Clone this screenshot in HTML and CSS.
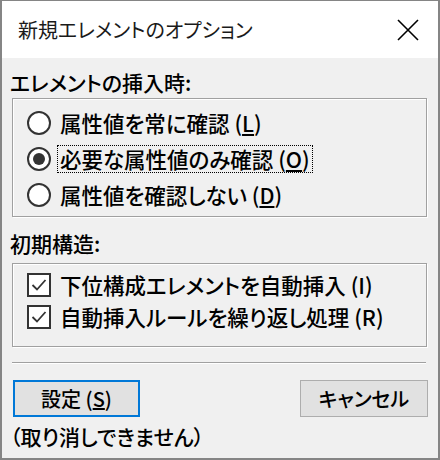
FILE: index.html
```html
<!DOCTYPE html>
<html lang="ja">
<head>
  <meta charset="UTF-8" />
  <title>新規エレメントのオプション</title>
  <link rel="stylesheet" href="styles.css">
</head>
<body>

<div class="dialog">
  <div class="titlebar">
    <span class="title">新規エレメントのオプション</span>
    <svg class="close" width="22" height="22" viewBox="0 0 22 22">
      <path d="M1 1 L21 21 M21 1 L1 21" stroke="#000" stroke-width="1.6" fill="none"/>
    </svg>
  </div>

  <div class="content">
    <div class="group-label">エレメントの挿入時:</div>
    <div class="group radios">
      <div class="option">
        <span class="radio"></span>
        <span class="text">属性値を常に確認 (<u>L</u>)</span>
      </div>
      <div class="option">
        <span class="radio checked"></span>
        <span class="text focused">必要な属性値のみ確認 (<u>O</u>)</span>
      </div>
      <div class="option">
        <span class="radio"></span>
        <span class="text">属性値を確認しない (<u>D</u>)</span>
      </div>
    </div>

    <div class="group-label second">初期構造:</div>
    <div class="group checks">
      <div class="option short">
        <span class="checkbox">
          <svg width="18" height="18" viewBox="0 0 18 18"><path d="M2.5 9 L7 13.5 L15.5 4" stroke="#333" stroke-width="1.8" fill="none"/></svg>
        </span>
        <span class="text">下位構成エレメントを自動挿入 (I)</span>
      </div>
      <div class="option short">
        <span class="checkbox">
          <svg width="18" height="18" viewBox="0 0 18 18"><path d="M2.5 9 L7 13.5 L15.5 4" stroke="#333" stroke-width="1.8" fill="none"/></svg>
        </span>
        <span class="text">自動挿入ルールを繰り返し処理 (R)</span>
      </div>
    </div>

    <div class="separator"></div>

    <div class="buttons">
      <button class="btn primary">設定 (<u>S</u>)</button>
      <button class="btn">キャンセル</button>
    </div>

    <div class="note">（取り消しできません）</div>
  </div>
</div>

</body>
</html>
```

FILE: styles.css
```css
body {
  margin: 0;
  background-color: #f0f0f0;
}

.dialog {
  width: 440px;
  height: 460px;
  box-sizing: border-box;
  border: 2px solid #858585;
  border-top-width: 1px;
  background-color: #f0f0f0;
  font-family: "Noto Sans CJK JP", sans-serif;
  font-feature-settings: "palt";
  font-weight: 500;
  color: #000;
}

.titlebar {
  height: 57px;
  background-color: #fff;
  display: flex;
  align-items: center;
  justify-content: space-between;
  padding: 0 19px 0 16px;
  font-size: 20px;
}

.title {
  color: #1a1a1a;
  font-weight: 400;
}

.content {
  padding: 0 9px 0 8px;
}

.group-label {
  font-size: 21px;
  line-height: 24px;
  margin-top: 12px;
}

.group-label.second {
  margin-top: 14px;
}

.group {
  margin: 4px 2px 0;
  border: 1px solid #a0a0a0;
  box-shadow: inset 1px 1px 0 #fff, 1px 1px 0 #fff;
}

.group.radios {
  padding: 6px 0 3px;
}

.group.checks {
  margin-top: 8px;
  padding: 5px 0 13px;
}

.option {
  display: flex;
  align-items: center;
  height: 36px;
  padding-left: 14px;
  gap: 6px;
  font-size: 21.5px;
}

.option.short {
  height: 32px;
}

.text {
  border: 1px dotted transparent;
  padding: 0 2px;
  line-height: 26px;
}

.text.focused {
  border-color: #000;
}

.radio {
  width: 24px;
  height: 24px;
  box-sizing: border-box;
  border: 2px solid #333;
  border-radius: 50%;
  background-color: #fff;
  display: flex;
  align-items: center;
  justify-content: center;
}

.radio.checked::after {
  content: "";
  width: 12px;
  height: 12px;
  border-radius: 50%;
  background-color: #333;
}

.checkbox {
  width: 24px;
  height: 24px;
  box-sizing: border-box;
  border: 2px solid #333;
  background-color: #fff;
  display: flex;
  align-items: center;
  justify-content: center;
}

.separator {
  margin: 15px 3px 0 2px;
  border-top: 1px solid #a0a0a0;
  border-bottom: 1px solid #fff;
}

.buttons {
  display: flex;
  justify-content: space-between;
  margin-top: 16px;
  padding: 0 1px 0 3px;
}

.btn {
  width: 128px;
  height: 37px;
  box-sizing: border-box;
  background-color: #e1e1e1;
  border: 1px solid #adadad;
  font-family: inherit;
  font-feature-settings: "palt";
  font-weight: 500;
  font-size: 20px;
  color: #000;
  padding: 0;
}

.btn.primary {
  width: 127px;
  border: 2px solid #0078d7;
}

.note {
  margin-top: 7px;
  font-size: 21px;
  line-height: 24px;
}
```
